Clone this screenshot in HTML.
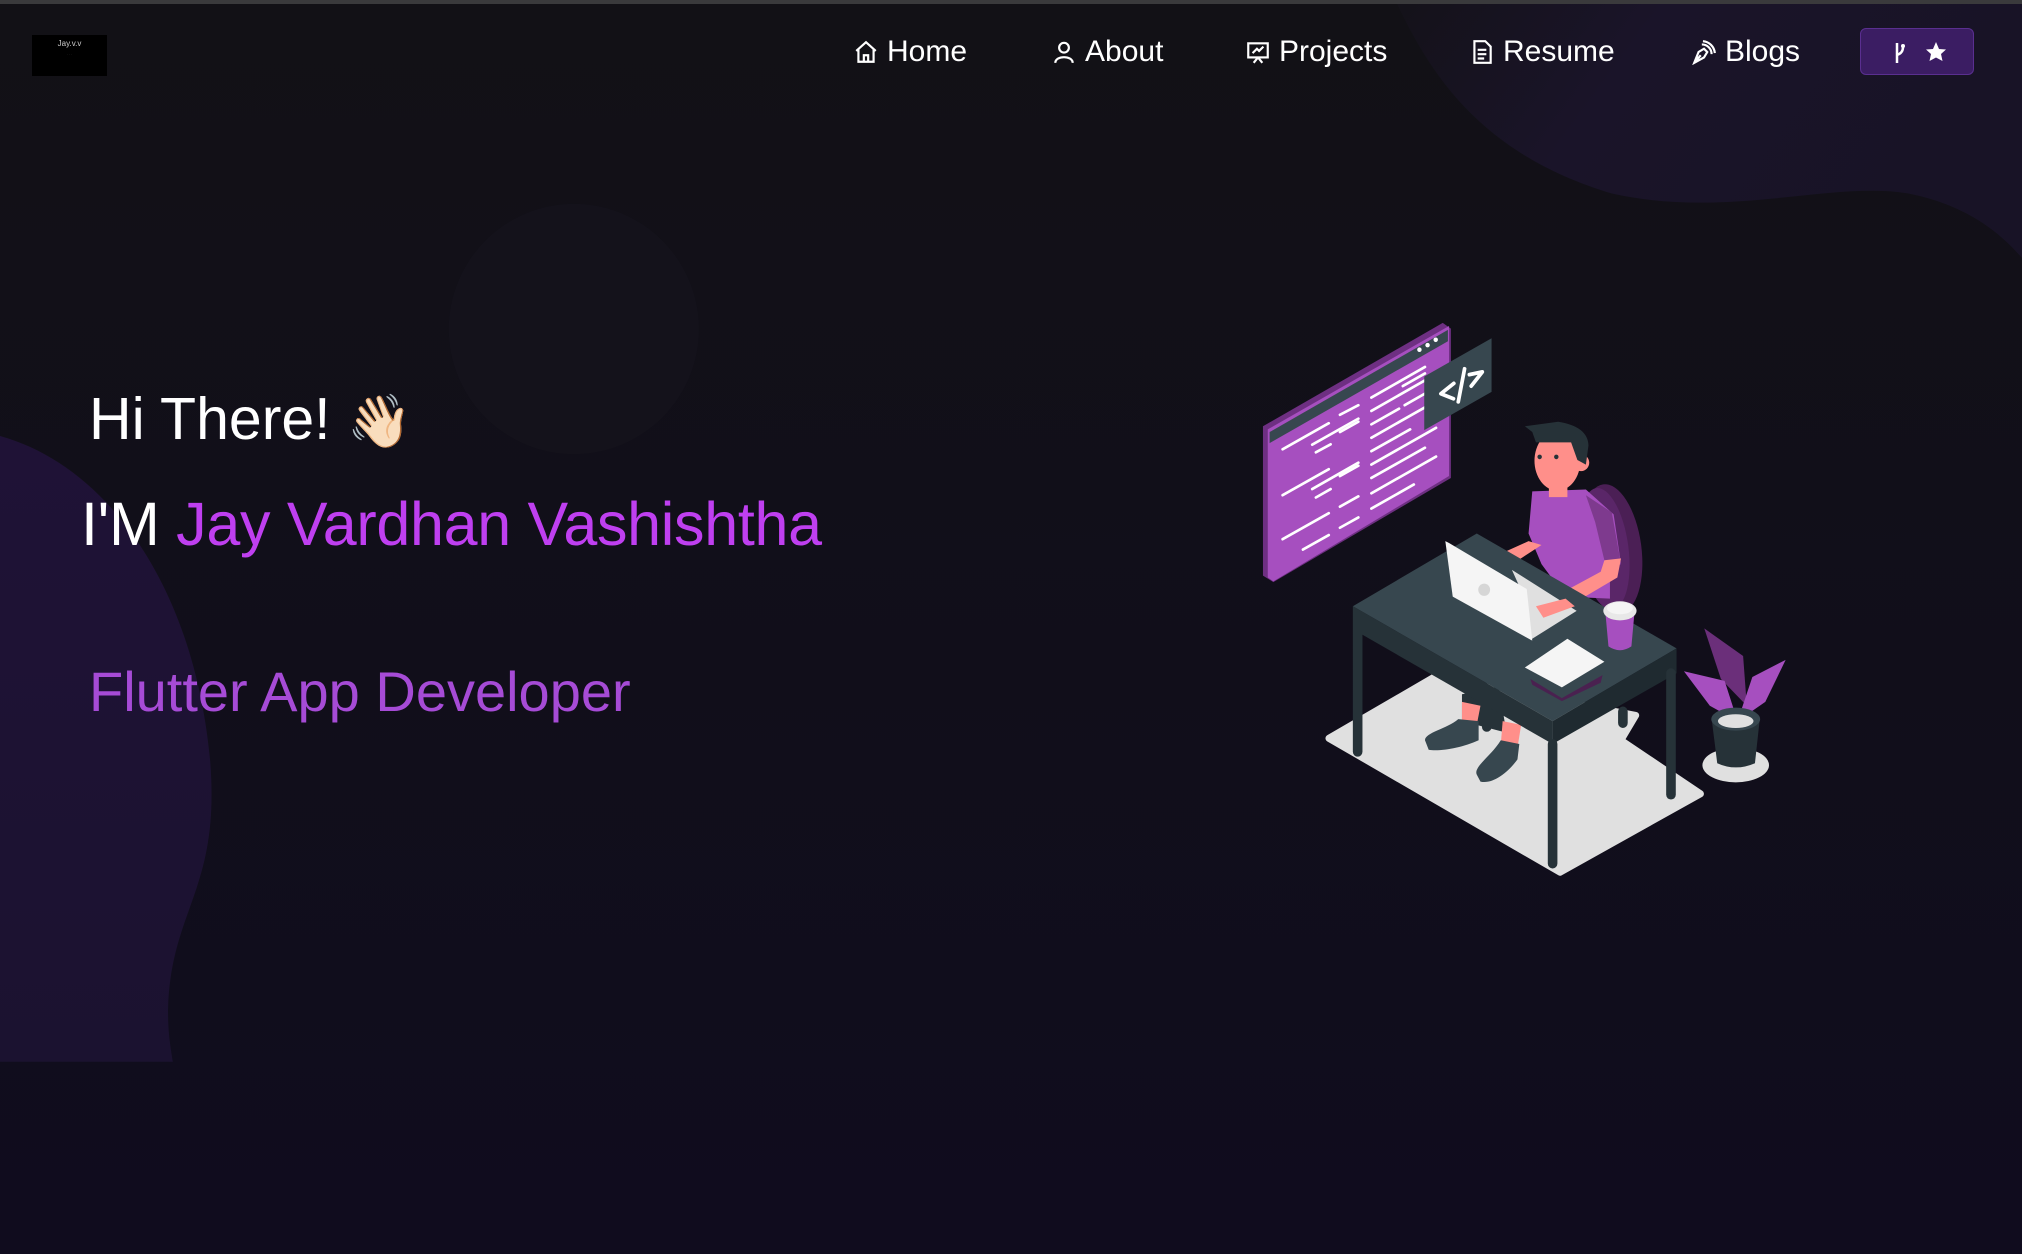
<!DOCTYPE html>
<html><head><meta charset="utf-8">
<style>
html,body{margin:0;padding:0;width:2022px;height:1254px;overflow:hidden;background:#111016;font-family:"Liberation Sans",sans-serif;}
#bg{position:absolute;left:0;top:0;width:2022px;height:1254px;}
.top{position:absolute;left:0;top:0;width:2022px;height:4px;background:#3a3a3c;}
.logo{position:absolute;left:32px;top:35px;width:75px;height:41px;background:#000;color:#ccc;font-size:8px;text-align:center;line-height:18px;}
.logo small{display:block;font-size:3px;line-height:2px;color:#888}
.nav{position:absolute;top:30px;height:44px;color:#fff;font-size:30px;line-height:44px;display:flex;align-items:center;gap:8px;}
.nav svg{width:26px;height:26px;}
.btn{position:absolute;left:1860px;top:28px;width:114px;height:47px;background:#3b1d63;border:1px solid #5a2f90;border-radius:6px;box-sizing:border-box;}
.t1{position:absolute;left:89px;top:384px;color:#fff;font-size:59px;line-height:70px;white-space:nowrap;}
.t2{position:absolute;left:81px;top:488px;color:#fff;font-size:61px;line-height:72px;white-space:nowrap;letter-spacing:-0.3px;}
.t2 span{color:#bf3ff0;}
.t3{position:absolute;left:89px;top:657px;color:#a64bd6;font-size:56px;line-height:70px;white-space:nowrap;}
</style></head><body>
<svg id="bg" viewBox="0 0 1568 972" preserveAspectRatio="none">
<defs>
<linearGradient id="bgg" x1="0" y1="0" x2="0" y2="1"><stop offset="0" stop-color="#121116"/><stop offset="1" stop-color="#100c1e"/></linearGradient>
<linearGradient id="tr" x1="0" y1="0" x2="1" y2="0.3"><stop offset="0" stop-color="#141219"/><stop offset="0.4" stop-color="#1a1429"/><stop offset="1" stop-color="#181326"/></linearGradient>
<linearGradient id="lb" x1="0" y1="0" x2="0" y2="1"><stop offset="0" stop-color="#1f1236"/><stop offset="1" stop-color="#1b1230"/></linearGradient>
</defs>
<rect width="1568" height="972" fill="url(#bgg)"/>
<path d="M1082,0 C1110,60 1150,120 1250,150 C1340,170 1420,140 1480,150 C1530,160 1555,185 1568,200 L1568,0 Z" fill="url(#tr)"/>
<circle cx="445" cy="255" r="97" fill="#14121b"/>
<path d="M0,338 C80,360 150,450 163,590 C170,680 140,700 132,760 C128,790 132,810 134,823 L0,823 Z" fill="url(#lb)"/>
<svg x="961.6" y="232.5" width="449.8" height="465.3" viewBox="0 0 1568 1568" preserveAspectRatio="none">
<path d="M240,1145 L525,985 L1070,1085 L1030,1150 L1245,1290 L865,1495 Z" fill="#e0e0e0" stroke="#e0e0e0" stroke-width="18" stroke-linejoin="round"/>
<ellipse cx="1340" cy="1215" rx="90" ry="45" fill="#e0e0e0"/>
<path d="M62,330 L548,60 L570,75 L570,465 L90,737 L62,720 Z" fill="#6e2f82"/>
<path d="M75,338 L565,68 L565,460 L90,735 L75,725 Z" fill="#a64fbf"/>
<path d="M80,345 L562,78 L562,108 L80,374 Z" fill="#37474f"/>
<circle cx="485" cy="130" r="6" fill="#fff"/><circle cx="507" cy="118" r="6" fill="#fff"/><circle cx="529" cy="104" r="6" fill="#fff"/>
<g stroke="#fff" stroke-width="7" stroke-linecap="round">
<line x1="115" y1="390" x2="240" y2="322"/><line x1="195" y1="378" x2="320" y2="310"/><line x1="270" y1="300" x2="320" y2="275"/><line x1="205" y1="398" x2="245" y2="377"/><line x1="270" y1="345" x2="320" y2="318"/>
<line x1="115" y1="510" x2="240" y2="442"/><line x1="195" y1="494" x2="320" y2="425"/><line x1="205" y1="516" x2="245" y2="494"/><line x1="270" y1="460" x2="320" y2="433"/>
<line x1="115" y1="625" x2="240" y2="557"/><line x1="170" y1="652" x2="240" y2="614"/><line x1="270" y1="595" x2="320" y2="568"/><line x1="270" y1="540" x2="320" y2="513"/>
<line x1="355" y1="255" x2="500" y2="175"/><line x1="355" y1="290" x2="500" y2="210"/><line x1="355" y1="325" x2="430" y2="284"/><line x1="445" y1="275" x2="530" y2="228"/><line x1="355" y1="360" x2="530" y2="264"/><line x1="355" y1="395" x2="460" y2="338"/><line x1="355" y1="430" x2="530" y2="334"/><line x1="355" y1="465" x2="500" y2="386"/><line x1="355" y1="505" x2="530" y2="409"/><line x1="355" y1="545" x2="470" y2="482"/><line x1="440" y1="225" x2="500" y2="192"/>
</g>
<path d="M498,200 L680,100 L680,240 L498,340 Z" fill="#37474f"/>
<g stroke="#fff" stroke-width="10" fill="none" stroke-linecap="round" stroke-linejoin="round">
<polyline points="578,218 543,245 577,258"/><line x1="607" y1="180" x2="590" y2="266"/><polyline points="620,195 655,188 625,225"/>
</g>
<ellipse cx="1005" cy="650" rx="80" ry="170" transform="rotate(-8 1005 650)" fill="#4b1f55"/>
<ellipse cx="985" cy="650" rx="65" ry="160" transform="rotate(-8 985 650)" fill="#5a2668"/>
<path d="M600,1030 L700,1010 L720,1130 L600,1100 Z" fill="#263238"/>
<path d="M600,1050 L650,1060 L640,1110 L600,1100 Z" fill="#ff8f8a"/>
<path d="M710,1100 L760,1110 L750,1170 L705,1160 Z" fill="#ff8f8a"/>
<path d="M500,1150 C500,1130 560,1120 590,1095 L645,1100 L645,1150 C600,1170 540,1180 510,1175 Z" fill="#37474f"/>
<path d="M640,1240 C630,1220 680,1190 705,1150 L755,1160 L750,1200 C720,1240 680,1265 650,1258 Z" fill="#37474f"/>
<path d="M790,500 L935,495 L1010,560 L1030,690 L1000,700 L1000,780 L880,775 L815,690 L780,610 Z" fill="#a64fbf"/>
<path d="M935,510 L1005,555 L1030,690 L990,700 L960,580 Z" fill="#7e3a8e"/>
<rect x="835" y="460" width="50" height="55" fill="#ff8f8a"/>
<ellipse cx="858" cy="420" rx="62" ry="78" fill="#ff8f8a"/>
<circle cx="922" cy="425" r="22" fill="#ff8f8a"/>
<path d="M770,330 L860,318 Q940,330 942,380 L935,430 L912,418 L895,372 L800,372 L790,345 Z" fill="#263238"/>
<circle cx="810" cy="410" r="6" fill="#263238"/><circle cx="855" cy="410" r="6" fill="#263238"/>
<path d="M780,630 L815,640 L720,700 L690,712 L655,690 L700,665 Z" fill="#ff8f8a"/>
<path d="M985,680 L1030,675 L1020,725 L880,805 L810,830 L800,800 L860,770 L975,710 Z" fill="#ff8f8a"/>
<path d="M305,800 L640,610 L1180,910 L845,1100 Z" fill="#37474f"/>
<path d="M305,800 L845,1100 L845,1160 L305,860 Z" fill="#263238"/>
<path d="M845,1100 L1180,910 L1180,975 L845,1160 Z" fill="#1f2a30"/>
<g stroke="#263238" stroke-width="26" stroke-linecap="round">
<line x1="318" y1="860" x2="318" y2="1180"/><line x1="845" y1="1160" x2="845" y2="1472"/><line x1="1165" y1="975" x2="1165" y2="1292"/><line x1="1035" y1="1075" x2="1035" y2="1105"/><line x1="667" y1="1060" x2="667" y2="1115"/>
</g>
<path d="M735,705 L910,812 L785,888 L770,780 Z" fill="#e0e0e0"/>
<path d="M555,630 L565,635 L775,755 L790,890 L575,775 Z" fill="#f5f5f5"/>
<circle cx="660" cy="757" r="16" fill="#d6d6d6"/>
<path d="M800,800 L880,780 L905,800 L820,830 Z" fill="#ff8f8a"/>
<path d="M988,820 L1066,820 L1058,905 Q1027,925 996,905 Z" fill="#a64fbf"/>
<ellipse cx="1027" cy="812" rx="45" ry="25" fill="#e8e8e8"/>
<ellipse cx="1027" cy="805" rx="35" ry="16" fill="#f5f5f5"/>
<path d="M785,990 L870,1040 L980,980 L975,1000 L870,1048 L790,1005 Z" fill="#4a2150"/>
<path d="M770,960 L885,885 L985,945 L870,1012 Z" fill="#f5f5f5"/>
<path d="M1255,858 L1360,930 L1370,1060 L1300,990 Z" fill="#6b2f7a"/>
<path d="M1200,970 L1310,995 L1345,1100 L1270,1060 Z" fill="#a64fbf"/>
<path d="M1475,940 L1385,985 L1345,1100 L1420,1050 Z" fill="#a64fbf"/>
<path d="M1275,1095 L1405,1095 L1392,1210 Q1340,1232 1290,1210 Z" fill="#263238"/>
<ellipse cx="1340" cy="1095" rx="66" ry="30" fill="#37474f"/>
<ellipse cx="1340" cy="1100" rx="48" ry="18" fill="#e0e0e0"/>
</svg>
</svg>
<div class="top"></div>
<div class="logo">Jay.v.v<small>· · ·</small></div>
<div class="nav" style="left:853px"><svg viewBox="0 0 24 24" fill="none" stroke="#fff" stroke-width="2"><path d="M3 11 L12 3 L21 11 M5 9 V21 H19 V9 M10 21 V15 H14 V21"/></svg>Home</div>
<div class="nav" style="left:1051px"><svg viewBox="0 0 24 24" fill="none" stroke="#fff" stroke-width="2"><circle cx="12" cy="8" r="4.5"/><path d="M4 22 C4 15 20 15 20 22"/></svg>About</div>
<div class="nav" style="left:1245px"><svg viewBox="0 0 24 24" fill="none" stroke="#fff" stroke-width="2"><rect x="3" y="4" width="18" height="13"/><path d="M7 13 L11 9 L13 11 L17 7 M12 17 L8 22 M12 17 L16 22"/></svg>Projects</div>
<div class="nav" style="left:1469px"><svg viewBox="0 0 24 24" fill="none" stroke="#fff" stroke-width="2"><path d="M5 2 H15 L20 7 V22 H5 Z M8 10 H16 M8 14 H16 M8 18 H14"/></svg>Resume</div>
<div class="nav" style="left:1691px"><svg viewBox="0 0 24 24" fill="none" stroke="#fff" stroke-width="2"><path d="M3 22 L7 12 L12 9 L15 12 L12 17 Z M3 22 L9 15 M10 5 A9 9 0 0 1 19 14 M11 2 A12 12 0 0 1 22 13"/></svg>Blogs</div>
<div class="btn"><svg width="114" height="47" viewBox="0 0 114 47"><g stroke="#fff" stroke-width="2.5" fill="none"><path d="M36 14 V34 M36 26 Q42 24 42 18"/></g><circle cx="42" cy="17" r="2" fill="#fff"/><path d="M75 13 L78 20 L85 20.5 L80 25 L81.5 32 L75 28.5 L68.5 32 L70 25 L65 20.5 L72 20 Z" fill="#fff"/></svg></div>
<div class="t1">Hi There! <span style="font-family:'Noto Color Emoji','DejaVu Sans',sans-serif;font-size:52px">👋🏻</span></div>
<div class="t2">I'M <span>Jay Vardhan Vashishtha</span></div>
<div class="t3">Flutter App Developer</div>
</body></html>
